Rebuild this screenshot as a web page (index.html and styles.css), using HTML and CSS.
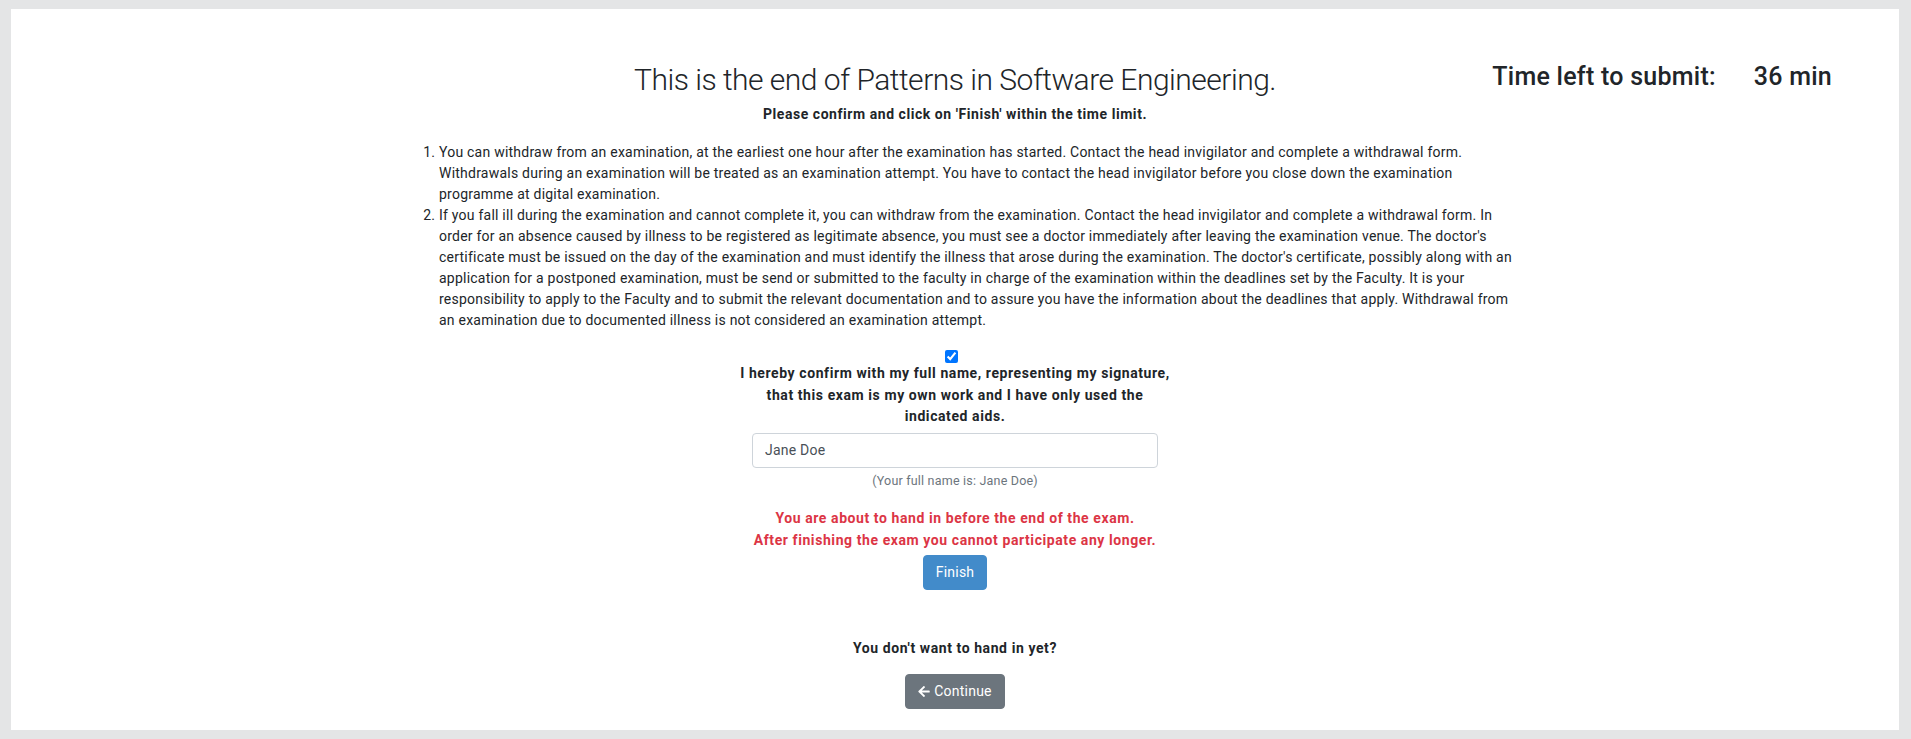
FILE: index.html
```html
<!DOCTYPE html>
<html lang="en">
<head>
<meta charset="utf-8">
<title>End of exam</title>
<link rel="stylesheet" href="styles.css">
</head>
<body>
<main class="panel">
  <header class="head">
    <h2 class="title">This is the end of Patterns in Software Engineering.</h2>
    <div class="timer"><span>Time left to submit:</span><span>36 min</span></div>
  </header>
  <p class="subtitle">Please confirm and click on 'Finish' within the time limit.</p>

  <ol class="terms">
    <li>You can withdraw from an examination, at the earliest one hour after the examination has started. Contact the head invigilator and complete a withdrawal form. Withdrawals during an examination will be treated as an examination attempt. You have to contact the head invigilator before you close down the examination programme at digital examination.</li>
    <li>If you fall ill during the examination and cannot complete it, you can withdraw from the examination. Contact the head invigilator and complete a withdrawal form. In order for an absence caused by illness to be registered as legitimate absence, you must see a doctor immediately after leaving the examination venue. The doctor's certificate must be issued on the day of the examination and must identify the illness that arose during the examination. The doctor's certificate, possibly along with an application for a postponed examination, must be send or submitted to the faculty in charge of the examination within the deadlines set by the Faculty. It is your responsibility to apply to the Faculty and to submit the relevant documentation and to assure you have the information about the deadlines that apply. Withdrawal from an examination due to documented illness is not considered an examination attempt.</li>
  </ol>

  <section class="confirm">
    <input class="check" type="checkbox" id="confirm" checked>
    <label class="confirm-text" for="confirm">I hereby confirm with my full name, representing my signature, that this exam is my own work and I have only used the indicated aids.</label>
    <input class="name-input" type="text" value="Jane Doe">
    <small class="hint">(Your full name is: Jane Doe)</small>
    <p class="warning">You are about to hand in before the end of the exam.<br>After finishing the exam you cannot participate any longer.</p>
    <button class="btn btn-primary" type="button">Finish</button>
    <p class="later">You don't want to hand in yet?</p>
    <button class="btn btn-secondary" type="button"><svg class="arrow" viewBox="0 0 448 512" aria-hidden="true"><path fill="currentColor" d="M257.5 445.1l-22.2 22.2c-9.4 9.4-24.6 9.4-33.9 0L7 273c-9.4-9.4-9.4-24.6 0-33.9L201.4 44.7c9.4-9.4 24.6-9.4 33.9 0l22.2 22.2c9.5 9.5 9.3 25-.4 34.3L136.6 216H424c13.3 0 24 10.7 24 24v32c0 13.3-10.7 24-24 24H136.6l120.5 114.8c9.8 9.3 10 24.8.4 34.3z"/></svg> Continue</button>
  </section>
</main>
</body>
</html>
```

FILE: styles.css
```css
* { box-sizing: border-box; }

html, body { height: 100%; }

body {
  margin: 0;
  padding: 9px 12px 9px 11px;
  background: #e4e5e6;
  font-family: Roboto, "Liberation Sans", Arial, sans-serif;
  font-size: 14px;
  line-height: 1.5;
  letter-spacing: 0.23px;
  color: #212529;
}

.panel {
  background: #fff;
  height: 100%;
  padding-top: 52px;
}

.head {
  display: grid;
  grid-template-columns: 1fr auto 1fr;
  align-items: start;
}

.title {
  grid-column: 2;
  margin: 0;
  font-size: 30px;
  font-weight: 300;
  line-height: 38px;
  letter-spacing: -0.5px;
  text-align: center;
  white-space: nowrap;
}

.timer {
  grid-column: 3;
  justify-self: end;
  display: flex;
  gap: 38px;
  margin-top: 1px;
  padding-right: 67px;
  font-size: 25px;
  font-weight: 500;
  line-height: 30px;
  letter-spacing: 0.25px;
}

.subtitle {
  margin: 6px 0 0;
  text-align: center;
  font-size: 14px;
  font-weight: 700;
  line-height: 19px;
  letter-spacing: 0.55px;
}

.terms {
  width: 1117px;
  margin: 18px 0 0 calc(50% - 556px);
  padding-left: 40px;
  line-height: 21px;
}

.confirm {
  display: flex;
  flex-direction: column;
  align-items: center;
  text-align: center;
}

.check {
  width: 13px;
  height: 13px;
  margin: 19px 8px 0 0;
  accent-color: #0075ff;
}

.confirm-text {
  width: 440px;
  font-weight: 700;
  line-height: 21.5px;
  letter-spacing: 0.58px;
}

.name-input {
  width: 406px;
  height: 35px;
  margin-top: 5px;
  padding: 6px 12px;
  border: 1px solid #ced4da;
  border-radius: 4px;
  font: inherit;
  letter-spacing: inherit;
  color: #495057;
}

.hint {
  margin-top: 3px;
  font-size: 12.5px;
  line-height: 19px;
  letter-spacing: 0.2px;
  color: #6c757d;
}

.warning {
  margin: 17px 0 0;
  color: #dc3545;
  font-weight: 700;
  line-height: 22px;
  letter-spacing: 0.58px;
}

.btn {
  margin-top: 4px;
  height: 35px;
  padding: 6px 12px;
  border: 1px solid transparent;
  border-radius: 4px;
  font: inherit;
  letter-spacing: inherit;
  color: #fff;
  line-height: 21px;
  display: inline-flex;
  align-items: center;
  gap: 4px;
}

.btn-primary { background: #428bca; border-color: #428bca; }
.btn-secondary { background: #6c757d; border-color: #6c757d; margin-top: 15px; }

.arrow { width: 12px; height: 13px; }

.later {
  margin: 48px 0 0;
  font-weight: 700;
  line-height: 21px;
  letter-spacing: 0.58px;
}
```
